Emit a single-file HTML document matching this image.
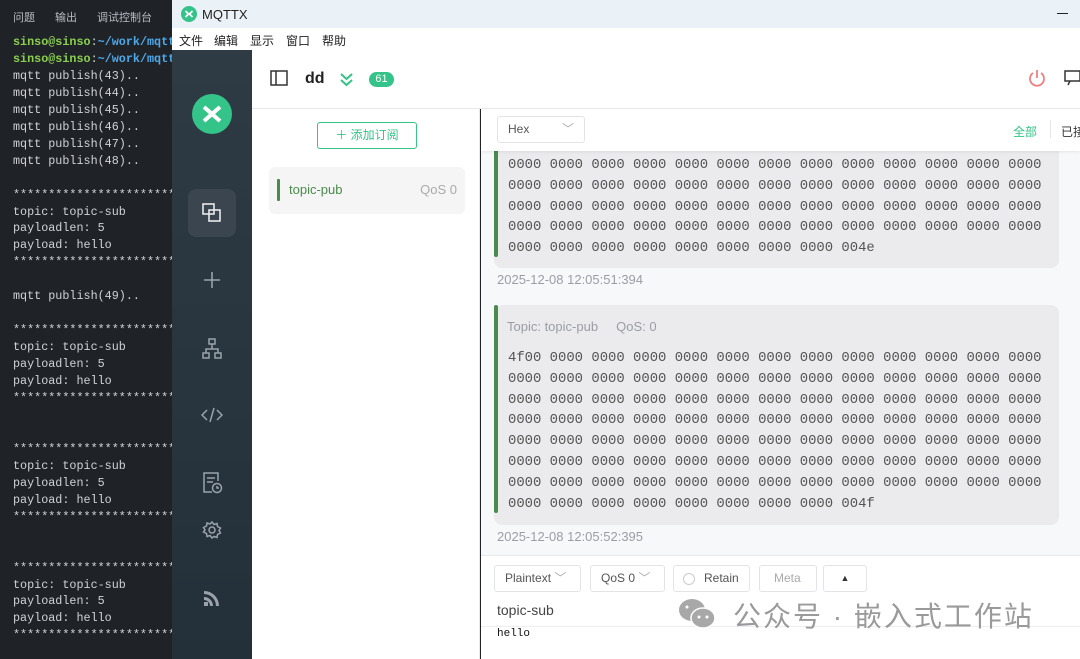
<!DOCTYPE html>
<html><head><meta charset="utf-8"><style>
*{margin:0;padding:0;box-sizing:border-box}
body{width:1080px;height:659px;overflow:hidden;position:relative;background:#1f2329;font-family:"Liberation Sans","Noto Sans CJK SC",sans-serif}
.abs{position:absolute}
#term{left:0;top:0;width:180px;height:659px;background:#1f2328}
#term .tabs{position:absolute;top:9px;left:13px;font-size:11px;color:#b8bcc2;white-space:nowrap}
#term .tabs span{margin-right:20px}
#term pre{position:absolute;left:13px;top:34px;font-family:"Liberation Mono",monospace;font-size:11.75px;line-height:16.95px;color:#cfd2d6}
.g{color:#8ccf4f;font-weight:bold}.b{color:#4fa8ea;font-weight:bold}
#title{left:172px;top:0;width:908px;height:28px;background:#eaf1f7}
#menu{left:172px;top:28px;width:908px;height:22px;background:#fff;font-size:12px;color:#222}
#menu span{position:absolute;top:4px}
#side{left:172px;top:50px;width:80px;height:609px;background:linear-gradient(#2e3a44,#243039)}
#head{left:252px;top:50px;width:828px;height:59px;background:#fff;border-bottom:1px solid #e6e8eb}
#topics{left:252px;top:109px;width:228px;height:550px;background:#fff;border-right:1px solid #e6e8eb}
#msgs{left:481px;top:109px;width:599px;height:446px;background:#f7f8fa;overflow:hidden}
.card{position:absolute;left:13px;width:565px;background:#ebebee;border-radius:8px}
.bar{position:absolute;left:0;width:4px;background:#4a8a4c;border-radius:2px}
.hex{position:absolute;left:14px;font-family:"Liberation Mono",monospace;font-size:13.9px;line-height:20.8px;color:#555;white-space:pre}
.ts{position:absolute;left:16px;font-size:13px;color:#9a9ea4}
#bottom{left:481px;top:555px;width:599px;height:104px;background:#fff;border-top:1px solid #e6e8eb}
.btn{position:absolute;top:9px;height:27px;border:1px solid #e2e4e8;border-radius:3px;font-size:12px;color:#555;line-height:25px;padding-left:10px;background:#fff;white-space:nowrap}
</style></head><body>
<div class="abs" id="term">
<div class="tabs"><span>问题</span><span>输出</span><span>调试控制台</span></div>
<pre><span class="g">sinso@sinso</span>:<span class="b">~/work/mqtt</span>
<span class="g">sinso@sinso</span>:<span class="b">~/work/mqtt</span>
mqtt publish(43)..
mqtt publish(44)..
mqtt publish(45)..
mqtt publish(46)..
mqtt publish(47)..
mqtt publish(48)..

************************
topic: topic-sub
payloadlen: 5
payload: hello
************************

mqtt publish(49)..

************************
topic: topic-sub
payloadlen: 5
payload: hello
************************


************************
topic: topic-sub
payloadlen: 5
payload: hello
************************


************************
topic: topic-sub
payloadlen: 5
payload: hello
************************</pre>
</div>
<div class="abs" id="title">
<svg class="abs" style="left:9px;top:6px" width="16" height="16" viewBox="0 0 16 16"><circle cx="8" cy="8" r="8" fill="#34c388"/><path d="M4.5 5l3 3-3 3M11.5 5l-3 3 3 3" stroke="#fff" stroke-width="1.8" fill="none"/></svg>
<span class="abs" style="left:30px;top:7px;font-size:13px;color:#222">MQTTX</span>
<span class="abs" style="left:885px;top:13px;width:11px;height:1px;background:#222"></span>
</div>
<div class="abs" id="menu"><span style="left:7px">文件</span><span style="left:42px">编辑</span><span style="left:78px">显示</span><span style="left:114px">窗口</span><span style="left:150px">帮助</span></div>
<div class="abs" id="side">
<svg class="abs" style="left:20px;top:44px" width="40" height="40" viewBox="0 0 40 40"><circle cx="20" cy="20" r="20" fill="#34c388"/><path d="M12 13l8 7-8 7M28 13l-8 7 8 7" stroke="#fff" stroke-width="4" fill="none"/></svg>
<div class="abs" style="left:16px;top:139px;width:48px;height:48px;background:#3a4550;border-radius:8px"></div>
<svg class="abs" style="left:29px;top:152px" width="22" height="22" viewBox="0 0 22 22" fill="none" stroke="#e8eaec" stroke-width="1.6"><rect x="2" y="2" width="11" height="10"/><rect x="8" y="8" width="11" height="11"/></svg>
<svg class="abs" style="left:30px;top:220px" width="20" height="20" viewBox="0 0 20 20" stroke="#9aa3ab" stroke-width="1.6"><path d="M10 2v16M2 10h16"/></svg>
<svg class="abs" style="left:29px;top:287px" width="22" height="24" viewBox="0 0 22 24" fill="none" stroke="#9aa3ab" stroke-width="1.5"><rect x="8" y="2" width="6" height="5"/><rect x="2" y="16" width="6" height="5"/><rect x="14" y="16" width="6" height="5"/><path d="M11 7v5M5 16v-4h12v4"/></svg>
<svg class="abs" style="left:29px;top:355px" width="22" height="20" viewBox="0 0 22 20" fill="none" stroke="#9aa3ab" stroke-width="1.5"><path d="M6 5l-5 5 5 5M16 5l5 5-5 5M13 3l-4 14"/></svg>
<svg class="abs" style="left:30px;top:421px" width="22" height="24" viewBox="0 0 22 24" fill="none" stroke="#9aa3ab" stroke-width="1.5"><path d="M10 21H2V2h14v8"/><path d="M5 7h8M5 11h6"/><circle cx="15" cy="17" r="4.5"/><path d="M15 15v2h2"/></svg>
<svg class="abs" style="left:30px;top:470px" width="20" height="20" viewBox="0 0 20 20" fill="none" stroke="#9aa3ab" stroke-width="1.5"><circle cx="10" cy="10" r="3"/><path d="M10 2l2 2.5 3-1 .5 3 3 1.5-1.5 2.5 1.5 2.5-3 1.5-.5 3-3-1L10 18l-2-2.5-3 1-.5-3-3-1.5L3 10 1.5 7.5l3-1.5.5-3 3 1z"/></svg>
<svg class="abs" style="left:31px;top:539px" width="18" height="18" viewBox="0 0 18 18" fill="#9aa3ab"><path d="M1 8a9 9 0 0 1 9 9h-3A6 6 0 0 0 1 11z"/><path d="M1 2a15 15 0 0 1 15 15h-3A12 12 0 0 0 1 5z"/><rect x="1" y="13" width="4" height="4"/></svg>
</div>
<div class="abs" id="head">
<svg class="abs" style="left:18px;top:20px" width="18" height="16" viewBox="0 0 18 16" fill="none" stroke="#333" stroke-width="1.5"><rect x="1" y="1" width="16" height="14"/><path d="M6 1v14"/></svg>
<span class="abs" style="left:53px;top:20px;font-size:16px;font-weight:bold;color:#222">dd</span>
<svg class="abs" style="left:87px;top:22px" width="15" height="15" viewBox="0 0 15 15" fill="none" stroke="#34c388" stroke-width="2"><path d="M2 2l5.5 5 5.5-5M2 8l5.5 5 5.5-5"/></svg>
<span class="abs" style="left:117px;top:22px;width:25px;height:15px;background:#34c388;border-radius:8px;color:#fff;font-size:11px;text-align:center;line-height:15px">61</span>
<svg class="abs" style="left:776px;top:19px" width="18" height="19" viewBox="0 0 18 19" fill="none" stroke="#f08080" stroke-width="1.8"><path d="M9 1v8"/><path d="M5 4a7 7 0 1 0 8 0"/></svg>
<svg class="abs" style="left:812px;top:19px" width="16" height="18" viewBox="0 0 16 18" fill="none" stroke="#333" stroke-width="1.5"><rect x="1" y="2" width="15" height="10"/><path d="M6 12l-2 4"/></svg>
</div>
<div class="abs" id="topics">
<div class="abs" style="left:65px;top:13px;width:100px;height:27px;border:1px solid #34c388;border-radius:3px;color:#34c388;font-size:12px;text-align:center;line-height:25px">＋ 添加订阅</div>
<div class="abs" style="left:17px;top:58px;width:196px;height:47px;background:#f4f5f4;border-radius:6px">
<div class="abs" style="left:8px;top:12px;width:3px;height:22px;background:#4a8a4c;border-radius:1px"></div>
<span class="abs" style="left:20px;top:15px;font-size:13px;color:#4a8a4c">topic-pub</span>
<span class="abs" style="right:8px;top:15px;font-size:13px;color:#aaa">QoS 0</span></div>
</div>
<div class="abs" id="msgs">
<div class="card" style="top:-10px;height:169px"><div class="bar" style="top:0;height:158px"></div>
<div class="hex" style="top:56px">0000 0000 0000 0000 0000 0000 0000 0000 0000 0000 0000 0000 0000
0000 0000 0000 0000 0000 0000 0000 0000 0000 0000 0000 0000 0000
0000 0000 0000 0000 0000 0000 0000 0000 0000 0000 0000 0000 0000
0000 0000 0000 0000 0000 0000 0000 0000 0000 0000 0000 0000 0000
0000 0000 0000 0000 0000 0000 0000 0000 004e</div></div>
<div class="ts" style="top:163px">2025-12-08 12:05:51:394</div>
<div class="card" style="top:196px;height:220px"><div class="bar" style="top:0;height:208px"></div>
<span class="abs" style="left:13px;top:14px;font-size:13px;color:#9a9ea4">Topic: topic-pub&nbsp;&nbsp;&nbsp;&nbsp; QoS: 0</span>
<div class="hex" style="top:43px">4f00 0000 0000 0000 0000 0000 0000 0000 0000 0000 0000 0000 0000
0000 0000 0000 0000 0000 0000 0000 0000 0000 0000 0000 0000 0000
0000 0000 0000 0000 0000 0000 0000 0000 0000 0000 0000 0000 0000
0000 0000 0000 0000 0000 0000 0000 0000 0000 0000 0000 0000 0000
0000 0000 0000 0000 0000 0000 0000 0000 0000 0000 0000 0000 0000
0000 0000 0000 0000 0000 0000 0000 0000 0000 0000 0000 0000 0000
0000 0000 0000 0000 0000 0000 0000 0000 0000 0000 0000 0000 0000
0000 0000 0000 0000 0000 0000 0000 0000 004f</div></div>
<div class="ts" style="top:420px">2025-12-08 12:05:52:395</div>
<div class="abs" style="left:0;top:0;width:599px;height:42px;background:#fff;box-shadow:0 1px 3px rgba(0,0,0,.08)">
<div class="abs" style="left:16px;top:7px;width:88px;height:27px;border:1px solid #e2e4e8;border-radius:3px;font-size:12px;color:#555;line-height:25px;padding-left:10px">Hex<span style="position:absolute;right:10px;color:#aaa">﹀</span></div>
<span class="abs" style="left:532px;top:14px;font-size:12px;color:#34c388">全部</span>
<span class="abs" style="left:569px;top:11px;width:1px;height:18px;background:#e2e4e8"></span>
<span class="abs" style="left:580px;top:14px;font-size:12px;color:#333;white-space:nowrap">已接收</span>
</div>
</div>
<div class="abs" id="bottom">
<div class="btn" style="left:13px;width:87px">Plaintext <span style="color:#aaa">﹀</span></div>
<div class="btn" style="left:109px;width:75px">QoS 0 <span style="color:#aaa">﹀</span></div>
<div class="btn" style="left:192px;width:77px;padding-left:30px">Retain<span class="abs" style="left:9px;top:7px;width:12px;height:12px;border:1px solid #ccc;border-radius:50%"></span></div>
<div class="btn" style="left:278px;width:58px;color:#aaa;padding-left:14px">Meta</div>
<div class="btn" style="left:342px;width:44px;text-align:center;padding:0;font-size:9px;color:#333">▲</div>
<span class="abs" style="left:16px;top:46px;font-size:14px;color:#444">topic-sub</span>
<div class="abs" style="left:0;top:70px;width:599px;height:1px;background:#eceef1"></div>
<span class="abs" style="left:16px;top:72px;font-family:'Liberation Mono',monospace;font-size:11px;color:#111">hello</span>
<svg class="abs" style="left:196px;top:40px" width="40" height="36" viewBox="0 0 40 36" fill="#a8a8a8"><ellipse cx="15" cy="14" rx="13" ry="11"/><ellipse cx="26" cy="22" rx="12" ry="10" stroke="#fff" stroke-width="1.5"/><circle cx="22" cy="21" r="1.5" fill="#fff"/><circle cx="30" cy="21" r="1.5" fill="#fff"/><circle cx="10" cy="11" r="1.5" fill="#fff"/></svg>
<span class="abs" style="left:252px;top:39px;font-size:28px;color:#9a9a9a;letter-spacing:2px;white-space:nowrap">公众号 · 嵌入式工作站</span>
</div>
</body></html>
